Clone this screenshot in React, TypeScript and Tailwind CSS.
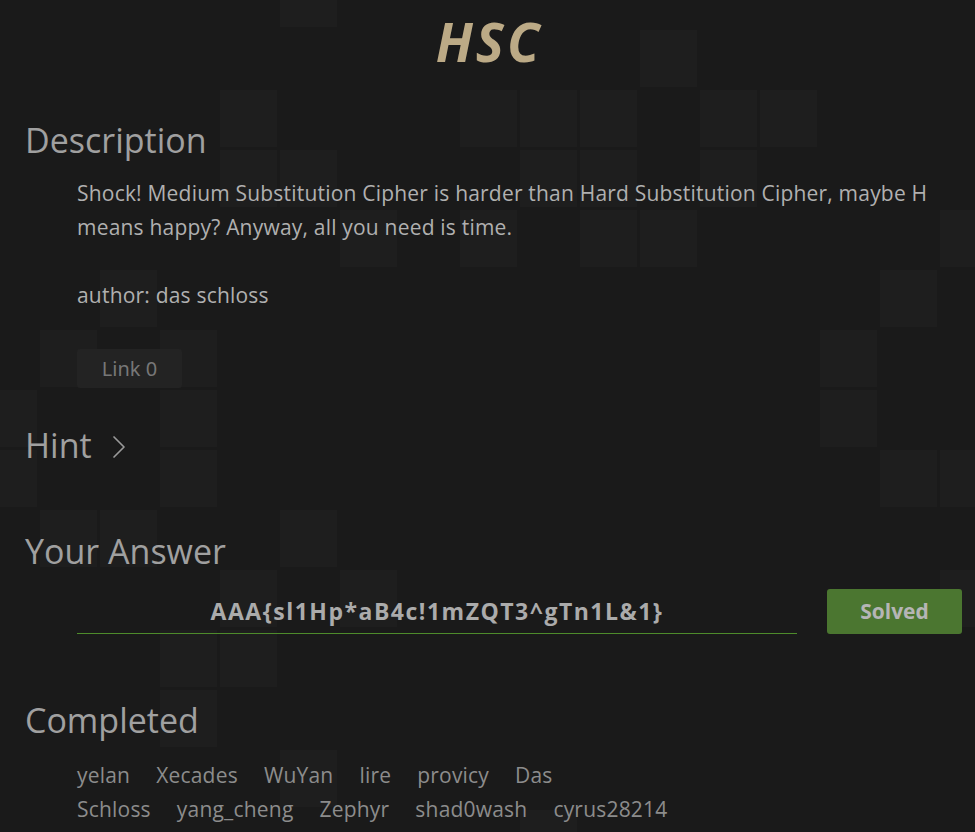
import { ChevronRight } from "lucide-react";

// lit squares of the backdrop, as "col-row" on a 60px pitch
const LIT = new Set([
  "5-0",
  "11-1",
  "4-2", "8-2", "9-2", "10-2", "12-2", "13-2",
  "4-3", "5-3", "9-3", "10-3", "12-3",
  "6-4", "8-4", "10-4", "11-4", "16-4",
  "2-5", "15-5",
  "1-6", "3-6", "14-6",
  "0-7", "3-7", "14-7",
  "0-8", "3-8", "15-8", "16-8",
  "1-9", "2-9", "5-9",
  "4-10", "6-10", "16-10",
  "3-11", "4-11",
  "3-12",
  "5-13",
  "9-14",
]);

const COLS = 17;
const ROWS = 15;

const solvers = [
  ["yelan", "Xecades", "WuYan", "lire", "provicy", "Das"],
  ["Schloss", "yang_cheng", "Zephyr", "shad0wash", "cyrus28214"],
];

function Backdrop() {
  const cells = [];
  for (let r = 0; r < ROWS; r++) {
    for (let c = 0; c < COLS; c++) {
      cells.push(
        <div
          key={`${c}-${r}`}
          className={`h-[57px] ${LIT.has(`${c}-${r}`) ? "bg-[#1e1e1e]" : ""}`}
        />
      );
    }
  }
  return (
    <div className="pointer-events-none absolute inset-0 overflow-hidden">
      <div className="-ml-5 -mt-[30px] grid grid-cols-[repeat(17,57px)] gap-[3px]">
        {cells}
      </div>
    </div>
  );
}

function Heading({ children }: { children: React.ReactNode }) {
  return (
    <h2 className="text-[34px] leading-[40px] text-[#a0a0a0]">{children}</h2>
  );
}

export default function App() {
  return (
    <div className="relative min-h-screen overflow-hidden bg-[#1a1a1a] font-['Open_Sans',sans-serif]">
      <Backdrop />
      <div className="relative flex flex-col px-[25px] pt-3">
        <h1 className="pl-[3px] text-center text-[53px] font-bold italic leading-[60px] tracking-[3px] text-[#bcaa86]">
          HSC
        </h1>

        <div className="mt-12">
          <Heading>Description</Heading>
          <div className="mt-4 pl-[52px] pr-2 text-[21px] leading-[34px] tracking-[0.2px] text-[#b0b0b0]">
            <p>
              Shock! Medium Substitution Cipher is harder than Hard Substitution
              Cipher, maybe H means happy? Anyway, all you need is time.
            </p>
            <p className="mt-[34px]">author: das schloss</p>
            <button className="mt-[37px] h-[39px] w-[105px] rounded-[3px] bg-[#232323] font-['Noto_Sans',sans-serif] text-[20px] tracking-normal text-[#777]">
              Link 0
            </button>
          </div>
        </div>

        <div className="mt-[37px] flex items-start gap-[7px]">
          <Heading>Hint</Heading>
          <ChevronRight
            className="mt-[2px] h-10 w-10 text-[#9a9a9a]"
            strokeWidth={1}
          />
        </div>

        <div className="mt-[64px]">
          <Heading>Your Answer</Heading>
          <div className="mt-[18px] flex items-center pl-[52px]">
            <div className="flex w-[720px] shrink-0 flex-col">
              <input
                readOnly
                value="AAA{sl1Hp*aB4c!1mZQT3^gTn1L&1}"
                className="h-[43px] bg-transparent text-center text-[23px] font-bold tracking-[1.5px] text-[#ababab] outline-none"
              />
              <div className="h-px bg-[#4e8c2b]" />
            </div>
            <button className="ml-[30px] h-[45px] w-[135px] shrink-0 rounded-[3px] bg-[#4b7630] text-[21px] font-bold text-[#b5b5b5]">
              Solved
            </button>
          </div>
        </div>

        <div className="mt-[66px]">
          <Heading>Completed</Heading>
          <div className="mt-[18px] flex flex-col pl-[52px] text-[21px] leading-[34px] tracking-[0.2px] text-[#8c8c8c]">
            {solvers.map((row, i) => (
              <div key={i} className="flex gap-[26px]">
                {row.map((name) => (
                  <span key={name}>{name}</span>
                ))}
              </div>
            ))}
          </div>
        </div>
      </div>
    </div>
  );
}
